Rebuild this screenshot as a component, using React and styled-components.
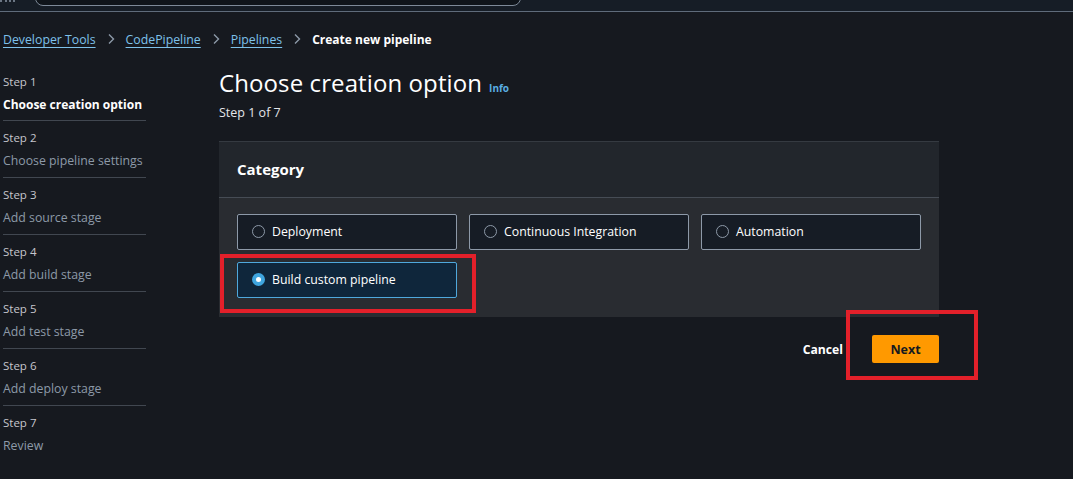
import React, { useState } from 'react';
import styled, { createGlobalStyle } from 'styled-components';

const GlobalStyle = createGlobalStyle`
  html, body {
    margin: 0;
    padding: 0;
    background: #16191f;
    font-family: "Open Sans", "Noto Sans", Arial, sans-serif;
    color: #d1d5db;
  }
  * { box-sizing: border-box; }
`;

const TopBar = styled.div`
  height: 12px;
  background: #161d26;
  border-bottom: 1px solid #5f6b7a;
  display: flex;
  align-items: flex-end;
  gap: 20px;
  overflow: hidden;
`;

const MenuDots = styled.div`
  width: 15px;
  height: 3px;
  margin-bottom: 8px;
  border-top: 2px dotted #6b7684;
`;

const Search = styled.div`
  width: 486px;
  height: 18px;
  margin-bottom: 5px;
  background: #0f141a;
  border: 1px solid #7d8998;
  border-radius: 8px;
`;

const Breadcrumbs = styled.nav`
  display: flex;
  align-items: center;
  gap: 10px;
  padding: 11px 0 0 3px;
  height: 43px;
  font-size: 12.3px;
`;

const Crumb = styled.a`
  color: #7ec1ea;
  text-decoration: underline;
  text-underline-offset: 3px;
  cursor: pointer;
`;

const Current = styled.span`
  color: #ffffff;
  font-weight: 700;
  font-size: 12px;
`;

const Chevron = () => (
  <svg width="10" height="12" viewBox="0 0 10 12" fill="none">
    <path d="M3 1.5 L7.5 6 L3 10.5" stroke="#8d99a8" strokeWidth="1.4" />
  </svg>
);

const Layout = styled.div`
  display: grid;
  grid-template-columns: 219px 720px;
  padding-top: 19px;
`;

const StepNav = styled.ol`
  list-style: none;
  margin: 0;
  padding: 0 0 0 3px;
  width: 146px;
`;

const StepItem = styled.li`
  height: ${(p) => (p.$first ? '47px' : '57px')};
  padding-top: ${(p) => (p.$first ? '0' : '9px')};
  border-bottom: ${(p) => (p.$last ? 'none' : '1px solid #414750')};
`;

const StepLabel = styled.div`
  font-size: 11.5px;
  color: #c6c6cd;
  line-height: 16px;
`;

const StepName = styled.div`
  font-size: ${(p) => (p.$active ? '12px' : '12.3px')};
  margin-top: 6px;
  line-height: 17px;
  white-space: nowrap;
  color: ${(p) => (p.$active ? '#ffffff' : '#8d99a8')};
  font-weight: ${(p) => (p.$active ? 700 : 400)};
`;

const Main = styled.main`
  display: flex;
  flex-direction: column;
`;

const TitleRow = styled.div`
  display: flex;
  align-items: baseline;
  gap: 7px;
  margin-top: -8px;
`;

const Title = styled.h1`
  margin: 0;
  font-size: 24px;
  font-weight: 400;
  color: #ffffff;
  letter-spacing: 0.1px;
`;

const InfoLink = styled.a`
  font-size: 10px;
  font-weight: 700;
  color: #5aaee3;
`;

const Subtitle = styled.div`
  font-size: 12.5px;
  color: #e4e6ea;
  margin-top: 5px;
`;

const Container = styled.section`
  margin-top: 20px;
  width: 720px;
  background: #292c31;
  border-top: 1px solid #353a41;
`;

const ContainerHeader = styled.div`
  background: #22262c;
  height: 56px;
  padding: 17px 18px 0;
  border-bottom: 1px solid #464c55;
  font-size: 15px;
  font-weight: 700;
  color: #ffffff;
`;

const TileGrid = styled.div`
  display: grid;
  grid-template-columns: repeat(3, 220px);
  gap: 12px;
  padding: 16px 18px 19px;
`;

const Highlight = styled.div`
  position: relative;
  &::after {
    content: '';
    position: absolute;
    left: -17px;
    right: -19px;
    top: -8px;
    bottom: -15px;
    border: 4px solid #e3202a;
    pointer-events: none;
  }
`;

const Tile = styled.label`
  height: 36px;
  display: flex;
  align-items: center;
  gap: 7px;
  padding-left: 14px;
  padding-bottom: 1px;
  border: 1px solid ${(p) => (p.$selected ? '#4fa8dc' : '#8d99a8')};
  background: ${(p) => (p.$selected ? '#0f263b' : '#161c25')};
  border-radius: 2px;
  font-size: 12.3px;
  color: #ffffff;
  cursor: pointer;
`;

const Radio = styled.span`
  width: 13px;
  height: 13px;
  border-radius: 50%;
  border: ${(p) => (p.$checked ? '4px solid #3fa5de' : '1px solid #8d99a8')};
  background: ${(p) => (p.$checked ? '#ffffff' : 'transparent')};
  flex-shrink: 0;
`;

const Actions = styled.div`
  display: flex;
  justify-content: flex-end;
  align-items: center;
  gap: 29px;
  margin-top: 18px;
  width: 720px;
`;

const CancelButton = styled.button`
  background: none;
  border: none;
  color: #ffffff;
  font-family: inherit;
  font-size: 12.2px;
  font-weight: 700;
  padding: 0;
`;

const NextWrap = styled.div`
  position: relative;
  &::after {
    content: '';
    position: absolute;
    left: -26px;
    right: -39px;
    top: -25px;
    bottom: -17px;
    border: 4px solid #e3202a;
    pointer-events: none;
  }
`;

const NextButton = styled.button`
  width: 67px;
  height: 28px;
  background: #ff9900;
  border: none;
  border-radius: 2px;
  font-family: inherit;
  font-size: 12.5px;
  font-weight: 700;
  color: #16191f;
  cursor: pointer;
`;

const steps = [
  'Choose creation option',
  'Choose pipeline settings',
  'Add source stage',
  'Add build stage',
  'Add test stage',
  'Add deploy stage',
  'Review',
];

const options = ['Deployment', 'Continuous Integration', 'Automation', 'Build custom pipeline'];

const App = () => {
  const [selected, setSelected] = useState('Build custom pipeline');

  return (
    <>
      <GlobalStyle />
      <TopBar>
        <MenuDots />
        <Search />
      </TopBar>
      <Breadcrumbs>
        <Crumb>Developer Tools</Crumb>
        <Chevron />
        <Crumb>CodePipeline</Crumb>
        <Chevron />
        <Crumb>Pipelines</Crumb>
        <Chevron />
        <Current>Create new pipeline</Current>
      </Breadcrumbs>
      <Layout>
        <StepNav>
          {steps.map((s, i) => (
            <StepItem key={s} $first={i === 0} $last={i === steps.length - 1}>
              <StepLabel>Step {i + 1}</StepLabel>
              <StepName $active={i === 0}>{s}</StepName>
            </StepItem>
          ))}
        </StepNav>
        <Main>
          <TitleRow>
            <Title>Choose creation option</Title>
            <InfoLink>Info</InfoLink>
          </TitleRow>
          <Subtitle>Step 1 of 7</Subtitle>
          <Container>
            <ContainerHeader>Category</ContainerHeader>
            <TileGrid>
              {options.map((o) => {
                const tile = (
                  <Tile key={o} $selected={selected === o} onClick={() => setSelected(o)}>
                    <Radio $checked={selected === o} />
                    {o}
                  </Tile>
                );
                return o === 'Build custom pipeline' ? <Highlight key={o}>{tile}</Highlight> : tile;
              })}
            </TileGrid>
          </Container>
          <Actions>
            <CancelButton>Cancel</CancelButton>
            <NextWrap>
              <NextButton>Next</NextButton>
            </NextWrap>
          </Actions>
        </Main>
      </Layout>
    </>
  );
};

export default App;
